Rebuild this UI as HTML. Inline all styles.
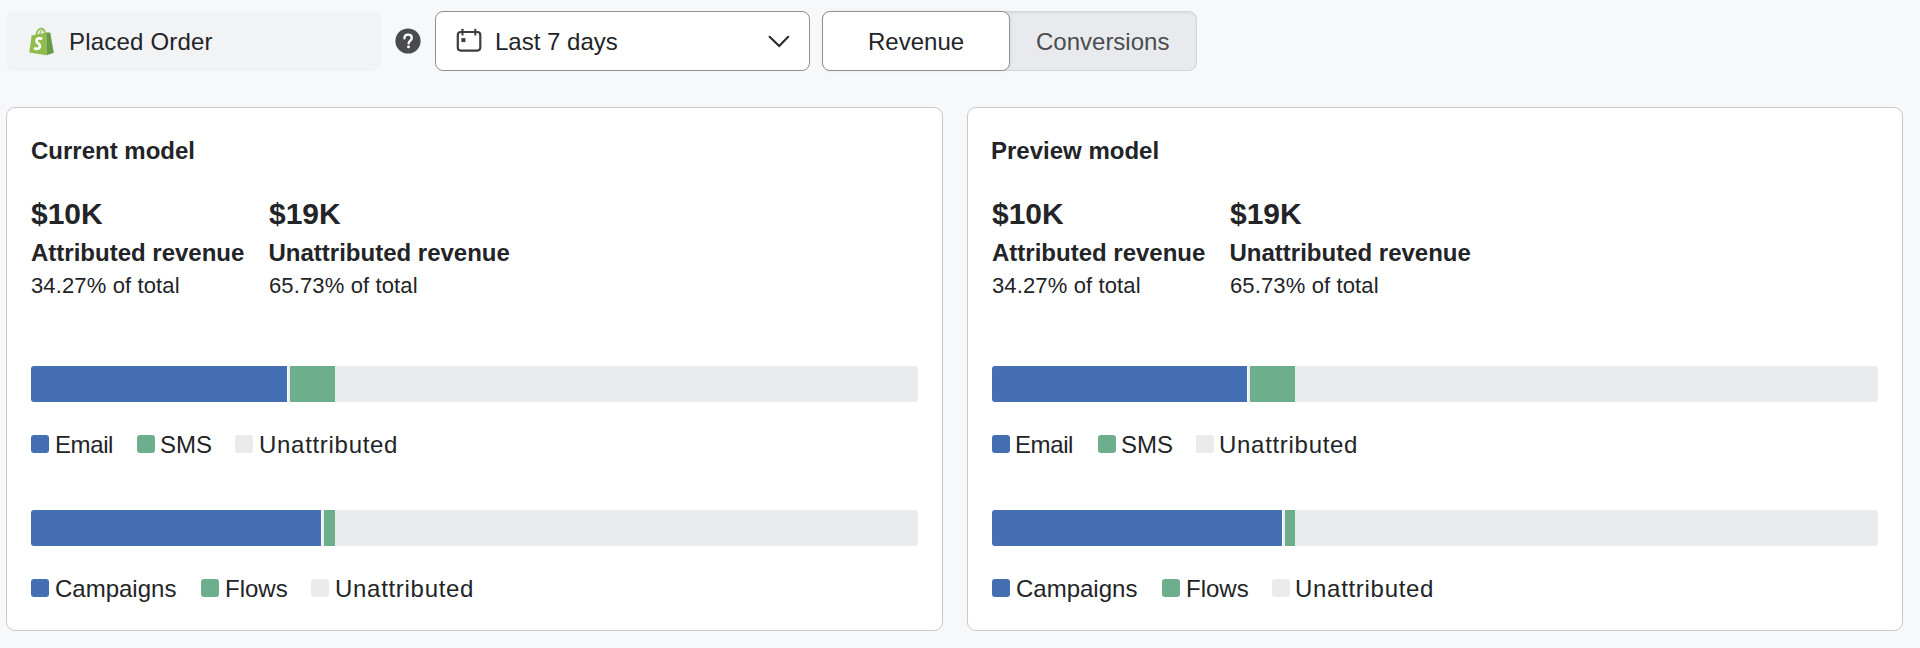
<!DOCTYPE html>
<html>
<head>
<meta charset="utf-8">
<style>
html,body{margin:0;padding:0;}
body{width:1920px;height:648px;background:#f7f8fa;position:relative;overflow:hidden;font-family:"Liberation Sans",sans-serif;color:#222427;}
.a{position:absolute;white-space:nowrap;line-height:1;}
.box{position:absolute;box-sizing:border-box;}
#event{left:6px;top:11px;width:375px;height:60px;background:#f2f3f5;border-radius:8px;}
#help{left:395px;top:28px;width:26px;height:26px;border-radius:50%;background:#4a4b4e;}
#date{left:435px;top:11px;width:375px;height:60px;background:#fff;border:1px solid #8c8f95;border-radius:8px;}
#seg{left:822px;top:11px;width:375px;height:60px;background:#e9eaed;border:1px solid #d3d5d9;border-radius:8px;box-shadow:inset 0 1px 3px rgba(0,0,0,0.07);}
#rev{left:822px;top:11px;width:188px;height:60px;background:#fff;border:1px solid #8c8f95;border-radius:8px;box-shadow:1px 0 4px rgba(0,0,0,0.06);}
.card{position:absolute;box-sizing:border-box;top:107px;height:524px;background:#fff;border:1px solid #c6cad0;border-radius:9px;}
.t24{font-size:24px;}
.b{font-weight:bold;}
.bar{position:absolute;height:36px;border-radius:3px;overflow:hidden;background:#eaebed;}
.seg{position:absolute;top:0;height:36px;}
.blue{background:#4470b3;}
.green{background:#6daf8c;}
.gray{background:#eaebed;}
.ua{letter-spacing:0.7px;}
.pct{font-size:22px;letter-spacing:0.13px;}
.sq{position:absolute;width:18px;height:18px;border-radius:3px;}
</style>
</head>
<body>
<!-- header controls -->
<div class="box" id="event"></div>
<svg class="box" style="left:29px;top:27px" width="25" height="29" viewBox="0 0 25 29">
  <path d="M7.2 8.6 C7.6 4.6 9.6 1.8 12.2 1.6 C14.4 1.5 15.6 3.4 16 6.2" fill="none" stroke="#8fbc4a" stroke-width="1.7"/>
  <path d="M10.6 8 C11 5.4 12 3.6 13.4 3.2" fill="none" stroke="#8fbc4a" stroke-width="1.1"/>
  <path d="M2.6 8.4 L17.2 5.6 L17.6 28.2 L0.3 25.4 Z" fill="#8fbc4a"/>
  <path d="M17.2 5.6 L21.2 5.4 L24.8 25.8 L17.6 28.2 Z" fill="#689b45"/>
  <path d="M13 12.4 C12 11.2 7.9 10.6 7.5 13.8 C7.2 16.2 11.3 16.6 11 19.2 C10.7 22.1 6.9 22.4 5.1 20.9" fill="none" stroke="#fff" stroke-width="2.7"/>
</svg>
<div class="a t24" style="left:69px;top:30px;letter-spacing:0.2px">Placed Order</div>

<svg class="box" style="left:395px;top:28px" width="26" height="26" viewBox="0 0 26 26">
  <circle cx="13" cy="13" r="12.6" fill="#4a4b4e"/>
  <path d="M9.4 10.4 C9.4 8 11 6.7 13.1 6.7 C15.2 6.7 16.8 8 16.8 10 C16.8 12.4 13.8 12.8 13.6 15.4" fill="none" stroke="#fff" stroke-width="2.3" stroke-linecap="round"/>
  <circle cx="13.5" cy="18.9" r="1.45" fill="#fff"/>
</svg>

<div class="box" id="date"></div>
<svg class="box" style="left:455px;top:27px" width="28" height="26" viewBox="0 0 28 26">
  <rect x="2.8" y="5" width="22.5" height="18.6" rx="3" fill="none" stroke="#3d3e41" stroke-width="2.2"/>
  <rect x="6.5" y="1.7" width="2" height="6.9" rx="0.6" fill="#3d3e41"/>
  <rect x="19.3" y="1.7" width="2" height="6.9" rx="0.6" fill="#3d3e41"/>
  <rect x="6.4" y="11.1" width="4" height="4" fill="#3d3e41"/>
</svg>
<div class="a t24" style="left:495px;top:30px">Last 7 days</div>
<svg class="box" style="left:767px;top:34px" width="24" height="15" viewBox="0 0 24 15">
  <polyline points="2.6,2.8 12.2,12 21.2,2.8" fill="none" stroke="#2a2b2e" stroke-width="2.1" stroke-linecap="round"/>
</svg>

<div class="box" id="seg"></div>
<div class="box" id="rev"></div>
<div class="a t24" style="left:868px;top:30px">Revenue</div>
<div class="a t24" style="left:1036px;top:30px;color:#4a4c50">Conversions</div>

<!-- left card -->
<div class="card" style="left:6px;width:937px"></div>
<div class="a t24 b" style="left:31px;top:139px">Current model</div>
<div class="a b" style="left:31px;top:199px;font-size:30px">$10K</div>
<div class="a b t24" style="left:31px;top:241px">Attributed revenue</div>
<div class="a pct" style="left:31px;top:275px">34.27% of total</div>
<div class="a b" style="left:269px;top:199px;font-size:30px">$19K</div>
<div class="a b t24" style="left:268.5px;top:241px">Unattributed revenue</div>
<div class="a pct" style="left:269px;top:275px">65.73% of total</div>

<div class="bar" style="left:31px;top:366px;width:887px">
  <div class="seg blue" style="left:0;width:256px"></div>
  <div class="seg" style="left:256px;width:3px;background:linear-gradient(90deg,#fbfbfb 0 1px,#ededf0 1px)"></div>
  <div class="seg green" style="left:259px;width:45px"></div>
</div>
<div class="sq blue" style="left:31px;top:435px"></div>
<div class="a t24" style="left:55px;top:433px;letter-spacing:-0.4px">Email</div>
<div class="sq green" style="left:137px;top:435px"></div>
<div class="a t24" style="left:160px;top:433px">SMS</div>
<div class="sq gray" style="left:235px;top:435px"></div>
<div class="a t24" style="left:259px;top:433px"><span class="ua">Unattributed</span></div>

<div class="bar" style="left:31px;top:510px;width:887px">
  <div class="seg blue" style="left:0;width:290px"></div>
  <div class="seg" style="left:290px;width:3px;background:linear-gradient(90deg,#fbfbfb 0 1px,#ededf0 1px)"></div>
  <div class="seg green" style="left:293px;width:11px"></div>
</div>
<div class="sq blue" style="left:31px;top:579px"></div>
<div class="a t24" style="left:55px;top:577px">Campaigns</div>
<div class="sq green" style="left:201px;top:579px"></div>
<div class="a t24" style="left:225px;top:577px">Flows</div>
<div class="sq gray" style="left:311px;top:579px"></div>
<div class="a t24" style="left:335px;top:577px"><span class="ua">Unattributed</span></div>

<!-- right card -->
<div class="card" style="left:967px;width:936px"></div>
<div class="a t24 b" style="left:991px;top:139px">Preview model</div>
<div class="a b" style="left:992px;top:199px;font-size:30px">$10K</div>
<div class="a b t24" style="left:992px;top:241px">Attributed revenue</div>
<div class="a pct" style="left:992px;top:275px">34.27% of total</div>
<div class="a b" style="left:1230px;top:199px;font-size:30px">$19K</div>
<div class="a b t24" style="left:1229.5px;top:241px">Unattributed revenue</div>
<div class="a pct" style="left:1230px;top:275px">65.73% of total</div>

<div class="bar" style="left:992px;top:366px;width:886px">
  <div class="seg blue" style="left:0;width:255px"></div>
  <div class="seg" style="left:255px;width:3px;background:linear-gradient(90deg,#fbfbfb 0 1px,#ededf0 1px)"></div>
  <div class="seg green" style="left:258px;width:45px"></div>
</div>
<div class="sq blue" style="left:992px;top:435px"></div>
<div class="a t24" style="left:1015px;top:433px;letter-spacing:-0.4px">Email</div>
<div class="sq green" style="left:1098px;top:435px"></div>
<div class="a t24" style="left:1121px;top:433px">SMS</div>
<div class="sq gray" style="left:1196px;top:435px"></div>
<div class="a t24" style="left:1219px;top:433px"><span class="ua">Unattributed</span></div>

<div class="bar" style="left:992px;top:510px;width:886px">
  <div class="seg blue" style="left:0;width:290px"></div>
  <div class="seg" style="left:290px;width:3px;background:linear-gradient(90deg,#fbfbfb 0 1px,#ededf0 1px)"></div>
  <div class="seg green" style="left:293px;width:10px"></div>
</div>
<div class="sq blue" style="left:992px;top:579px"></div>
<div class="a t24" style="left:1016px;top:577px">Campaigns</div>
<div class="sq green" style="left:1162px;top:579px"></div>
<div class="a t24" style="left:1186px;top:577px">Flows</div>
<div class="sq gray" style="left:1272px;top:579px"></div>
<div class="a t24" style="left:1295px;top:577px"><span class="ua">Unattributed</span></div>
</body>
</html>
